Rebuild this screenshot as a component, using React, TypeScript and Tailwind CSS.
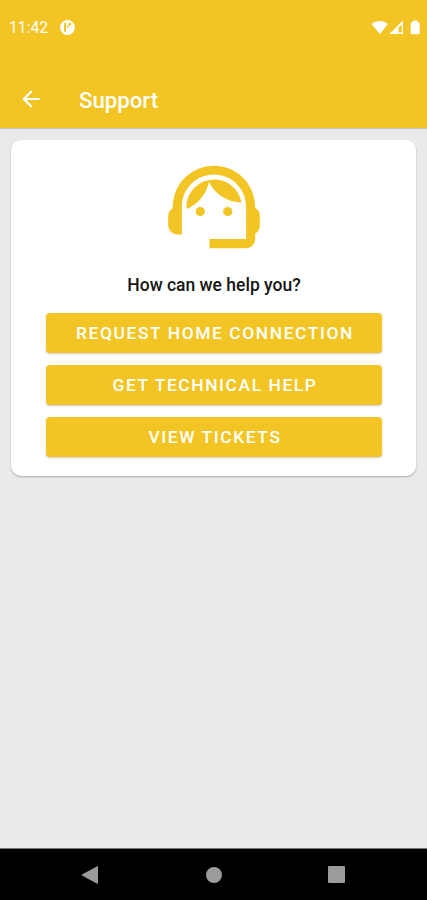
function NotificationIcon(props: React.SVGProps<SVGSVGElement>) {
  return (
    <svg viewBox="0 0 16 16" fill="none" {...props}>
      <circle cx="8" cy="8" r="7.9" fill="white" />
      <path d="M5.400 3.200V12.600" stroke="#f2c525" strokeWidth="2.200" />
      <path d="M8.300 8.200V5.600" stroke="#f2c525" strokeWidth="1.500" />
      <circle cx="10.400" cy="4.500" r="1.500" fill="#f2c525" />
    </svg>
  );
}

function StatusIcons(props: React.SVGProps<SVGSVGElement>) {
  return (
    <svg viewBox="0 0 50 16" fill="white" {...props}>
      <path d="M.6 4.1C4.6 -.1 12.9 -.1 16.9 4.1L8.8 14.100Z" />
      <path
        fillRule="evenodd"
        d="M32 .4V14.100H18.300ZM30.700 4.600 27.600 7.700V12.500h3.100Z"
      />
      <path d="M42.300 .6h3.900v.8c1.900.3 2.500 1.300 2.500 2.800v8.800c0 .8-.5 1.200-1.300 1.200h-6.400c-.8 0-1.300-.4-1.300-1.200V4.200c0-1.500.7-2.500 2.600-2.800Z" />
    </svg>
  );
}

function BackIcon(props: React.SVGProps<SVGSVGElement>) {
  return (
    <svg viewBox="0 0 24 24" fill="currentColor" {...props}>
      <path d="M20 11H7.83l5.59-5.59L12 4l-8 8 8 8 1.41-1.41L7.83 13H20v-2z" />
    </svg>
  );
}

function SupportAgentIcon(props: React.SVGProps<SVGSVGElement>) {
  return (
    <svg viewBox="0 0 24 24" fill="currentColor" {...props}>
      <path d="M21 12.22C21 6.73 16.74 3 12 3c-4.69 0-9 3.65-9 9.28-.6.34-1 .98-1 1.72v2c0 1.1.9 2 2 2h1v-6.1c0-3.87 3.13-7 7-7s7 3.13 7 7V19h-8v2h8c1.1 0 2-.9 2-2v-1.22c.59-.31 1-.92 1-1.64v-2.3c0-.7-.41-1.31-1-1.62z" />
      <circle cx="9" cy="13" r="1" />
      <circle cx="15" cy="13" r="1" />
      <path d="M18 11.03C17.52 8.18 15.04 6 12.05 6c-3.03 0-6.29 2.51-6.03 6.45 2.47-1.01 4.33-3.21 4.86-5.89 1.31 2.63 4 4.44 7.12 4.47z" />
    </svg>
  );
}

function ActionButton({ children }: { children: React.ReactNode }) {
  return (
    <button className="h-10 w-full rounded bg-[#f2c525] pl-[2px] pt-px text-[17.4px] font-medium tracking-[1.58px] text-white shadow-[0_1px_2px_rgba(0,0,0,0.22)]">
      {children}
    </button>
  );
}

export default function App() {
  return (
    <div className="flex h-[900px] w-[427px] flex-col overflow-hidden bg-[#eaeaea] font-[Roboto,sans-serif]">
      <header className="h-32 shrink-0 bg-[#f2c525] text-white shadow-[0_1px_1px_rgba(0,0,0,0.15)]">
        <div className="flex h-[55px] items-center pl-[9px] pr-[6px]">
          <span className="text-[15.7px] leading-none">11:42</span>
          <NotificationIcon className="ml-[12px] h-[15px] w-[15px]" />
          <StatusIcons className="ml-auto h-4 w-[50px]" />
        </div>
        <div className="mt-[15px] flex h-[57px] items-center pl-[18px]">
          <button aria-label="Back">
            <BackIcon className="h-[26px] w-[26px]" />
          </button>
          <h1 className="ml-[35px] pt-[2px] text-[22.2px] font-medium leading-[26px]">
            Support
          </h1>
        </div>
      </header>

      <main className="flex-1 px-[11px] pt-3">
        <section className="flex h-[336px] flex-col items-center rounded-[10px] bg-white pl-[35px] pr-[34px] pt-[12px] shadow-[0_1px_2px_rgba(0,0,0,0.28)]">
          <SupportAgentIcon className="h-[110px] w-[110px] shrink-0 text-[#f2c525]" />
          <h2 className="mt-[13px] text-[17.5px] font-medium leading-5 text-[#151515]">
            How can we help you?
          </h2>
          <div className="mt-[18px] flex w-full flex-col gap-3">
            <ActionButton>REQUEST HOME CONNECTION</ActionButton>
            <ActionButton>GET TECHNICAL HELP</ActionButton>
            <ActionButton>VIEW TICKETS</ActionButton>
          </div>
        </section>
      </main>

      {/* Android navigation bar */}
      <nav className="flex h-[52px] shrink-0 items-center justify-between border-t border-[#777] bg-black pl-[81px] pr-[82px]">
        <svg viewBox="0 0 18 18" className="h-[18px] w-[18px]" fill="#9b9b9b">
          <path d="M16.200 0.200Q17 0 17 .8V17.200Q17 18 16.200 17.700L1 9.600Q.2 9 1 8.400Z" />
        </svg>
        <div className="h-4 w-4 rounded-full bg-[#9b9b9b]" />
        <div className="h-[17px] w-[17px] rounded-[1px] bg-[#9b9b9b]" />
      </nav>
    </div>
  );
}
